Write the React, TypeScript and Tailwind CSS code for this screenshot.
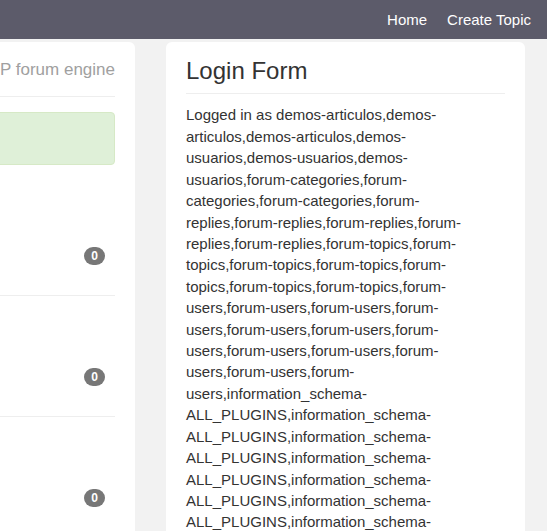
const loginText =
  'Logged in as demos-articulos,demos-articulos,demos-articulos,demos-usuarios,demos-usuarios,demos-usuarios,' +
  'forum-categories,forum-categories,forum-categories,' +
  'forum-replies,forum-replies,forum-replies,forum-replies,forum-replies,' +
  'forum-topics,forum-topics,forum-topics,forum-topics,forum-topics,forum-topics,forum-topics,' +
  'forum-users,forum-users,forum-users,forum-users,forum-users,forum-users,forum-users,forum-users,forum-users,forum-users,forum-users,forum-users,' +
  'information_schema-ALL_PLUGINS,information_schema-ALL_PLUGINS,information_schema-ALL_PLUGINS,information_schema-ALL_PLUGINS,' +
  'information_schema-ALL_PLUGINS,information_schema-ALL_PLUGINS,information_schema-ALL_PLUGINS,information_schema-ALL_PLUGINS';

// reply counts per topic row (titles sit off-screen in the left column)
const topics = [0, 0, 0];

function TopicRow({ replies }: { replies: number }) {
  return (
    <div className="h-[121px] border-b border-[#eeeeee] flex justify-end items-start pt-[72px] px-[10px]">
      <span className="h-[18px] min-w-[21px] px-[7px] rounded-[10px] bg-[#777777] text-white text-[12px] font-bold leading-[18px] text-center">
        {replies}
      </span>
    </div>
  );
}

export default function App() {
  return (
    <div
      className="w-[547px] h-[531px] overflow-hidden bg-[#f2f2f2] text-[#333333]"
      style={{ fontFamily: '"Liberation Sans", Arial, sans-serif' }}
    >
      <nav className="h-[39px] bg-[#5c5b6a] flex items-center justify-end gap-5 pr-4 text-[15px] leading-5 text-white">
        <a>Home</a>
        <a>Create Topic</a>
      </nav>

      <div className="flex justify-end gap-[31px] pt-[3px] pr-[22px]">
        <div className="w-[420px] shrink-0 bg-white rounded-md px-5 pt-4 pb-5">
          <div className="pb-[14px] border-b border-[#eeeeee] text-right text-[17px] leading-6 text-[#a0a0a0]">
            A simple PHP forum engine
          </div>
          <div className="mt-[15px] mb-[10px] h-[53px] rounded bg-[#dff0d8] border border-[#d6e9c6]" />
          {topics.map((n, i) => (
            <TopicRow key={i} replies={n} />
          ))}
        </div>

        <div className="w-[359px] shrink-0 bg-white rounded-md px-5 pt-4 pb-5">
          <h3 className="text-[24px] leading-[1.1] pb-[9px] border-b border-[#eeeeee]">Login Form</h3>
          <p className="mt-[10px] text-[15px] leading-[1.42857]">{loginText}</p>
        </div>
      </div>
    </div>
  );
}
